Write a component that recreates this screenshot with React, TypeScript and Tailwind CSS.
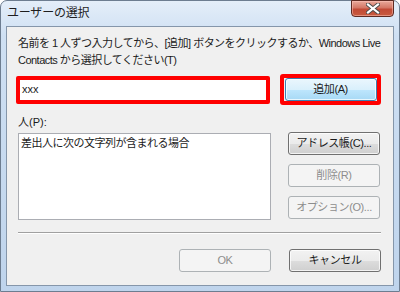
import React from 'react';

const jp = { fontFamily: '"Liberation Sans", "Noto Sans CJK JP", sans-serif' };

type BtnProps = {
  label: string;
  disabled?: boolean;
  primary?: boolean;
};

function WinButton({ label, disabled, primary }: BtnProps) {
  if (disabled) {
    return (
      <div className="w-[92px] h-[23px] rounded-[3px] border border-[#adb2b5] bg-[#f4f4f4] flex items-center justify-center text-[11px] tracking-[-0.4px] text-[#8d8d8d]">
        {label}
      </div>
    );
  }
  return (
    <div
      className={`w-[92px] h-[23px] rounded-[3px] border flex items-center justify-center text-[11px] tracking-[-0.4px] text-[#1b1b1b] shadow-[inset_0_0_0_1px_rgba(255,255,255,0.75)] ${
        primary
          ? 'border-[#3c7fb1] bg-[linear-gradient(180deg,#eaf6fd_0%,#d9f0fc_50%,#bee6fd_51%,#a7d9f5_100%)]'
          : 'border-[#707070] bg-[linear-gradient(180deg,#f2f2f2_0%,#ebebeb_50%,#dddddd_51%,#cfcfcf_100%)]'
      }`}
    >
      {label}
    </div>
  );
}

export default function App() {
  return (
    <div style={jp} className="w-[400px] h-[292px] bg-white">
      <div className="w-[400px] h-[292px] rounded-t-[7px] border border-[#6d7d90] bg-[linear-gradient(180deg,#e4eef9_0%,#cfe0f3_12%,#bfd4ec_100%)] flex flex-col">
        {/* タイトルバー */}
        <div className="h-[25px] flex items-start relative">
          <div className="pl-[6px] pt-[4px] text-[12px] tracking-[-0.2px] text-[#1e1e1e] leading-[17px]">
            ユーザーの選択
          </div>
          <div className="ml-auto mr-[5px] w-[43px] h-[17px] -mt-px rounded-b-[4px] border border-[#5e2a22] bg-[linear-gradient(180deg,#e9a99b_0%,#d47766_45%,#c24a36_55%,#c85b3f_100%)] flex items-center justify-center shadow-[inset_0_0_0_1px_rgba(255,200,190,0.5)]">
            <svg width="14" height="11" viewBox="0 0 14 11">
              <path d="M2 1.5 L12 9.5 M12 1.5 L2 9.5" stroke="#4a4a4a" strokeWidth="4" strokeLinecap="square" />
              <path d="M2 1.5 L12 9.5 M12 1.5 L2 9.5" stroke="#ffffff" strokeWidth="2.2" strokeLinecap="square" />
            </svg>
          </div>
        </div>

        {/* クライアント領域 */}
        <div className="mx-[5px] h-[260px] border border-[#8596aa] bg-[#f0f0f0] pl-[11px] pr-[12px] flex flex-col">
          <div className="mt-[8px] text-[11px] tracking-[-0.52px] leading-[17px] text-[#1b1b1b] whitespace-nowrap">
            <div>名前を 1 人ずつ入力してから、[追加] ボタンをクリックするか、Windows Live</div>
            <div>Contacts から選択してください(T)</div>
          </div>

          <div className="mt-[5px] flex items-center -ml-[2px]">
            <div className="w-[257px] h-[28px] rounded-[2px] border-[4px] border-[#ff0000] bg-white flex items-center pl-[2px] text-[11px] text-[#1b1b1b]">
              xxx
            </div>
            <div className="ml-[10px] w-[102px] h-[31px] rounded-[3px] border-[4px] border-[#ff0000] flex items-center justify-center">
              <WinButton label="追加(A)" primary />
            </div>
          </div>

          <div className="mt-[9px] text-[11px] leading-[17px] text-[#1b1b1b]">人(P):</div>

          <div className="mt-[2px] flex items-start">
            <div className="w-[253px] h-[87px] border border-[#abadb3] bg-white px-[2px] pt-[1px] text-[11px] tracking-[-0.5px] leading-[16px] text-[#1b1b1b]">
              差出人に次の文字列が含まれる場合
            </div>
            <div className="ml-[17px] -mt-[1px] flex flex-col gap-[9px]">
              <WinButton label="アドレス帳(C)..." />
              <WinButton label="削除(R)" disabled />
              <WinButton label="オプション(O)..." disabled />
            </div>
          </div>

          <div className="mt-[12px] h-px bg-[#a0a0a0] border-b border-white box-content" />

          <div className="mt-[15px] flex justify-end gap-[18px]">
            <WinButton label="OK" disabled />
            <WinButton label="キャンセル" />
          </div>
        </div>
      </div>
    </div>
  );
}
